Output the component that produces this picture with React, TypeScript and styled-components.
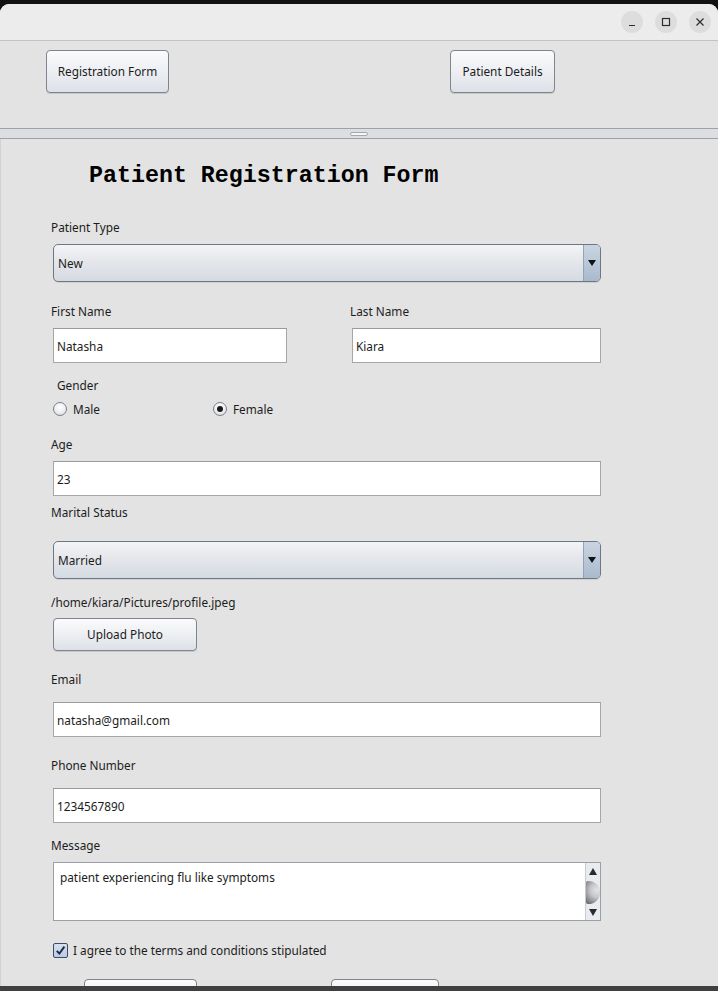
import React from "react";
import styled, { createGlobalStyle } from "styled-components";

const GlobalStyle = createGlobalStyle`
  html, body {
    margin: 0;
    padding: 0;
    background: #121212;
    overflow: hidden;
  }
  * {
    box-sizing: border-box;
  }
`;

const Screen = styled.div`
  width: 718px;
  height: 991px;
  display: flex;
  flex-direction: column;
  background: #121212;
  font-family: "Noto Sans", "DejaVu Sans", sans-serif;
  font-size: 11.8px;
  color: #1c1c1c;
`;

const Window = styled.div`
  margin-top: 4px;
  height: 982px;
  display: flex;
  flex-direction: column;
  background: #e3e3e3;
  border-radius: 9px 9px 0 0;
  overflow: hidden;
`;

const TitleBar = styled.div`
  height: 37px;
  flex: none;
  background: #ececec;
  border-bottom: 1px solid #c3c3c3;
  display: flex;
  align-items: center;
  justify-content: flex-end;
  gap: 12px;
  padding-right: 7px;
`;

const WinButton = styled.div`
  width: 22px;
  height: 22px;
  border-radius: 50%;
  background: #dddddd;
  display: flex;
  align-items: center;
  justify-content: center;
  color: #2e2e2e;
`;

const TopPanel = styled.div`
  height: 87px;
  flex: none;
  display: flex;
  align-items: flex-start;
  padding: 9px 0 0 46px;
`;

const Button = styled.button<{ $w: number; $h: number; $ml?: number }>`
  width: ${({ $w }) => $w}px;
  height: ${({ $h }) => $h}px;
  margin-left: ${({ $ml }) => $ml || 0}px;
  flex: none;
  padding: 0 0 2px;
  border: 1px solid #7f848d;
  border-radius: 4px;
  background: linear-gradient(#fbfbfc 0%, #eef0f3 45%, #dde1e8 100%);
  box-shadow: 0 1px 0 rgba(0, 0, 0, 0.12);
  font-family: "Noto Sans", "DejaVu Sans", sans-serif;
  font-size: 11.8px;
  color: #1c1c1c;
`;

const UploadButton = styled(Button)`
  display: block;
  margin-top: 8px;
`;

const Divider = styled.div`
  height: 11px;
  flex: none;
  border-top: 1px solid #9da2aa;
  border-bottom: 1px solid #9da2aa;
  background: #dcdee2;
  display: flex;
  justify-content: center;
  padding-top: 3px;
`;

const Grip = styled.div`
  width: 18px;
  height: 4px;
  border: 1px solid #a4a8af;
  border-radius: 2px;
  background: #f6f6f7;
`;

const Content = styled.div`
  flex: 1;
  padding: 23px 0 0 50px;
  border-left: 1px solid #d2d2d2;
`;

const Heading = styled.h1`
  margin: 0 0 0 38px;
  height: 28px;
  font-family: "Liberation Mono", "DejaVu Sans Mono", monospace;
  font-weight: 700;
  font-size: 23.3px;
  line-height: 28px;
  color: #000;
`;

const Label = styled.div<{ $gap: number; $ml?: number }>`
  margin-top: ${({ $gap }) => $gap}px;
  margin-left: ${({ $ml }) => $ml || 0}px;
  height: 16px;
  line-height: 16px;
  white-space: nowrap;
`;

const TextInput = styled.input<{ $gap: number; $w?: number }>`
  display: block;
  margin: ${({ $gap }) => $gap}px 0 0 2px;
  width: ${({ $w }) => $w || 548}px;
  height: 35px;
  border: 1px solid #a6a6a6;
  border-top-color: #9a9a9a;
  background: #fff;
  padding: 0 0 0 3px;
  font-family: "Noto Sans", "DejaVu Sans", sans-serif;
  font-size: 11.8px;
  color: #1c1c1c;
  outline: none;
`;

const Combo = styled.div<{ $gap: number }>`
  margin: ${({ $gap }) => $gap}px 0 0 2px;
  width: 548px;
  height: 38px;
  display: flex;
  border: 1px solid #6f7683;
  border-radius: 5px;
  overflow: hidden;
  background: linear-gradient(#f3f4f6 0%, #e6e8ec 40%, #d5dae2 100%);
  box-shadow: 0 1px 0 rgba(0, 0, 0, 0.08);
`;

const ComboValue = styled.div`
  flex: 1;
  display: flex;
  align-items: center;
  padding-left: 4px;
`;

const ComboArrow = styled.div`
  width: 17px;
  flex: none;
  border-left: 1px solid #95a3b4;
  background: linear-gradient(#c9d4e1 0%, #b6c5d6 60%, #a9bacd 100%);
  display: flex;
  align-items: center;
  justify-content: center;
  &::after {
    content: "";
    border-left: 4px solid transparent;
    border-right: 4px solid transparent;
    border-top: 6px solid #111;
  }
`;

const NameRow = styled.div`
  display: grid;
  grid-template-columns: 299px 251px;
  margin-top: 21px;
`;

const Column = styled.div`
  display: flex;
  flex-direction: column;
`;

const RadioRow = styled.div`
  margin: 8px 0 0 2px;
  display: flex;
  height: 16px;
  align-items: center;
`;

const RadioItem = styled.div<{ $w?: number }>`
  width: ${({ $w }) => ($w ? `${$w}px` : "auto")};
  display: flex;
  align-items: center;
  gap: 6px;
`;

const RadioDot = styled.span<{ $on?: boolean }>`
  width: 14px;
  height: 14px;
  border-radius: 50%;
  border: 1px solid #7c7f86;
  background: radial-gradient(circle at 50% 35%, #ffffff 0%, #eceef1 55%, #cdd1d7 100%);
  display: flex;
  align-items: center;
  justify-content: center;
  &::after {
    content: "";
    width: 6px;
    height: 6px;
    border-radius: 50%;
    background: ${({ $on }) => ($on ? "#1a1a1a" : "transparent")};
  }
`;

const TextArea = styled.div`
  margin: 9px 0 0 2px;
  width: 548px;
  height: 59px;
  border: 1px solid #9a9fa8;
  background: #fff;
  display: flex;
`;

const AreaText = styled.div`
  flex: 1;
  padding: 6px 0 0 6px;
  line-height: 16px;
`;

const ScrollBar = styled.div`
  width: 15px;
  flex: none;
  background: #e8ebef;
  border-left: 1px solid #c7cbd1;
  display: flex;
  flex-direction: column;
  align-items: center;
  justify-content: space-between;
  padding: 5px 0 4px;
`;

const Arrow = styled.span<{ $up?: boolean }>`
  width: 0;
  height: 0;
  border-left: 4px solid transparent;
  border-right: 4px solid transparent;
  ${({ $up }) =>
    $up ? "border-bottom: 7px solid #2a2a2a;" : "border-top: 7px solid #2a2a2a;"}
`;

const Thumb = styled.span`
  align-self: flex-start;
  width: 14px;
  height: 23px;
  border-radius: 2px 12px 12px 2px;
  background: radial-gradient(circle at 80% 40%, #e4e4e6 0%, #c6c6c9 40%, #5e5e62 100%);
`;

const CheckRow = styled.div`
  margin: 21px 0 0 2px;
  display: flex;
  align-items: center;
  gap: 5px;
  height: 16px;
`;

const CheckBox = styled.span`
  width: 15px;
  height: 15px;
  border: 1.5px solid #3d4c66;
  border-radius: 2px;
  background: linear-gradient(#d6e1ef, #b9cbe2);
  display: flex;
  align-items: center;
  justify-content: center;
`;

const ActionRow = styled.div`
  margin-top: 21px;
  padding-left: 33px;
  display: flex;
`;

const Taskbar = styled.div`
  height: 5px;
  flex: none;
  background: #404040;
`;

export default function App() {
  return (
    <Screen>
      <GlobalStyle />
      <Window>
        <TitleBar>
          <WinButton>
            <svg width="10" height="10" viewBox="0 0 10 10">
              <path d="M2 8.5h6" stroke="currentColor" strokeWidth="1.2" />
            </svg>
          </WinButton>
          <WinButton>
            <svg width="10" height="10" viewBox="0 0 10 10">
              <rect x="1.5" y="1.5" width="7" height="7" fill="none" stroke="currentColor" strokeWidth="1.2" />
            </svg>
          </WinButton>
          <WinButton>
            <svg width="10" height="10" viewBox="0 0 10 10">
              <path d="M1.5 1.5l7 7M8.5 1.5l-7 7" stroke="currentColor" strokeWidth="1.2" />
            </svg>
          </WinButton>
        </TitleBar>

        <TopPanel>
          <Button $w={123} $h={43}>Registration Form</Button>
          <Button $w={105} $h={43} $ml={281}>Patient Details</Button>
        </TopPanel>

        <Divider>
          <Grip />
        </Divider>

        <Content>
          <Heading>Patient Registration Form</Heading>

          <Label $gap={29}>Patient Type</Label>
          <Combo $gap={9}>
            <ComboValue>New</ComboValue>
            <ComboArrow />
          </Combo>

          <NameRow>
            <Column>
              <Label $gap={0}>First Name</Label>
              <TextInput $gap={9} $w={234} value="Natasha" readOnly />
            </Column>
            <Column>
              <Label $gap={0}>Last Name</Label>
              <TextInput $gap={9} $w={249} value="Kiara" readOnly />
            </Column>
          </NameRow>

          <Label $gap={14} $ml={6}>Gender</Label>
          <RadioRow>
            <RadioItem $w={160}>
              <RadioDot />
              Male
            </RadioItem>
            <RadioItem>
              <RadioDot $on />
              Female
            </RadioItem>
          </RadioRow>

          <Label $gap={19}>Age</Label>
          <TextInput $gap={9} value="23" readOnly />

          <Label $gap={8}>Marital Status</Label>
          <Combo $gap={21}>
            <ComboValue>Married</ComboValue>
            <ComboArrow />
          </Combo>

          <Label $gap={15}>/home/kiara/Pictures/profile.jpeg</Label>
          <UploadButton $w={144} $h={33} $ml={2}>
            Upload Photo
          </UploadButton>

          <Label $gap={20}>Email</Label>
          <TextInput $gap={15} value="natasha@gmail.com" readOnly />

          <Label $gap={20}>Phone Number</Label>
          <TextInput $gap={15} value="1234567890" readOnly />

          <Label $gap={14}>Message</Label>
          <TextArea>
            <AreaText>patient experiencing flu like symptoms</AreaText>
            <ScrollBar>
              <Arrow $up />
              <Thumb />
              <Arrow />
            </ScrollBar>
          </TextArea>

          <CheckRow>
            <CheckBox>
              <svg width="11" height="11" viewBox="0 0 11 11">
                <path d="M1.8 5.8l2.6 2.8L9.4 1.6" fill="none" stroke="#1d2740" strokeWidth="1.9" />
              </svg>
            </CheckBox>
            I agree to the terms and conditions stipulated
          </CheckRow>

          <ActionRow>
            <Button $w={113} $h={33} aria-label="Submit" />
            <Button $w={108} $h={33} $ml={134} aria-label="Clear" />
          </ActionRow>
        </Content>
      </Window>
      <Taskbar />
    </Screen>
  );
}
